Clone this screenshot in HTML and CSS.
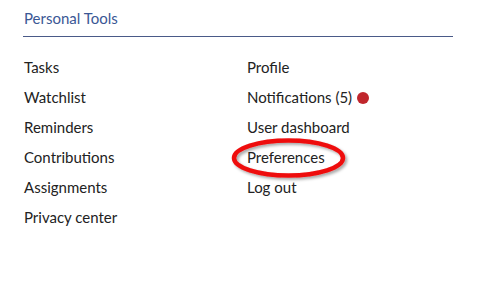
FILE: index.html
```html
<!DOCTYPE html>
<html>
<head>
	<title>Personal Tools</title>
	<link rel="stylesheet" href="styles.css">
</head>
<body>
	<div id="panel">
		<h2 class="title">Personal Tools</h2>
		<div class="columns">
			<ul>
				<li>Tasks</li>
				<li>Watchlist</li>
				<li>Reminders</li>
				<li>Contributions</li>
				<li>Assignments</li>
				<li>Privacy center</li>
			</ul>
			<ul>
				<li>Profile</li>
				<li>Notifications (5) <span class="dot"></span></li>
				<li>User dashboard</li>
				<li class="marked">Preferences
					<svg class="ring" width="128" height="46" viewBox="0 0 128 46">
						<defs>
							<filter id="sh" x="-10%" y="-20%" width="130%" height="150%">
								<feDropShadow dx="2" dy="2" stdDeviation="1.5" flood-color="#000" flood-opacity="0.35"/>
							</filter>
						</defs>
						<ellipse cx="59.5" cy="20" rx="54.5" ry="17.5" fill="none" stroke="#ee0c0c" stroke-width="4.5" filter="url(#sh)"/>
					</svg>
				</li>
				<li>Log out</li>
			</ul>
		</div>
	</div>
</body>
</html>
```
FILE: styles.css
```css
body {
	margin: 0;
	background: #fff;
	font-family: 'Lato', 'Liberation Sans', sans-serif;
	color: #222;
}

#panel {
	width: 430px;
	padding: 8px 0 0 23px;
}

.title {
	font-size: 15px;
	font-weight: 400;
	color: #3a5795;
	margin: 0;
	padding: 0 0 8px 1px;
	line-height: 20px;
	border-bottom: 1px solid #4a5a88;
}

.columns {
	display: grid;
	grid-template-columns: 223px 1fr;
	padding: 15px 0 0 1px;
}

.columns ul {
	list-style: none;
	margin: 0;
	padding: 0;
}

.columns li {
	font-size: 15px;
	line-height: 30px;
	height: 30px;
}

.dot {
	display: inline-block;
	width: 12px;
	height: 12px;
	border-radius: 50%;
	background: #c0262c;
	vertical-align: -1px;
	margin-left: 1px;
}

.marked {
	position: relative;
}

.ring {
	position: absolute;
	left: -18px;
	top: -4px;
	pointer-events: none;
}
```
